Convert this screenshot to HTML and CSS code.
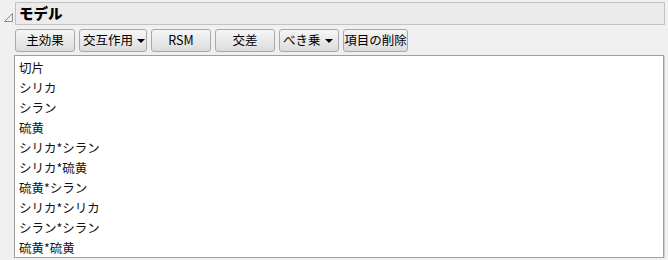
FILE: index.html
```html
<!DOCTYPE html>
<html lang="ja">
<head>
  <meta charset="UTF-8" />
  <title>モデル</title>
  <link rel="stylesheet" href="styles.css">
</head>
<body>
  <div class="panel">
    <div class="panel-head">
      <svg class="toggle" width="10" height="10" viewBox="0 0 10 10">
        <path d="M9.5 1.5 L9.5 9.5 L1.5 9.5 Z" fill="none" stroke="#8a8a8a" stroke-width="1"/>
      </svg>
      <div class="title">モデル</div>
    </div>
    <div class="body">
      <div class="toolbar">
        <button class="btn">主効果</button>
        <button class="btn menu">交互作用<span class="caret"></span></button>
        <button class="btn">RSM</button>
        <button class="btn">交差</button>
        <button class="btn menu short">べき乗<span class="caret"></span></button>
        <button class="btn tight">項目の削除</button>
      </div>
      <ul class="effects">
        <li>切片</li>
        <li>シリカ</li>
        <li>シラン</li>
        <li>硫黄</li>
        <li>シリカ*シラン</li>
        <li>シリカ*硫黄</li>
        <li>硫黄*シラン</li>
        <li>シリカ*シリカ</li>
        <li>シラン*シラン</li>
        <li>硫黄*硫黄</li>
      </ul>
    </div>
  </div>
</body>
</html>
```

FILE: styles.css
```css
:root {
  --bg: #f0f0f0;
  --head: #ebebeb;
  --line: #c2c2c2;
  --text: #000000;
}

body {
  margin: 0;
  background-color: var(--bg);
  font-family: "Noto Sans CJK JP", "Noto Sans", sans-serif;
  font-size: 12px;
  color: var(--text);
}

.panel {
  padding: 2px 3px 0 2px;
}

.panel-head {
  display: flex;
  align-items: center;
}

.toggle {
  margin: 7px 2px 0 1px;
  flex: none;
}

.title {
  flex: 1;
  height: 21px;
  line-height: 20px;
  background-color: var(--head);
  border: 1px solid var(--line);
  padding-left: 3px;
  font-weight: 900;
  font-size: 14.5px;
}

.body {
  margin-left: 12px;
}

.toolbar {
  display: flex;
  gap: 4px;
  padding: 4px 0 3px 1px;
}

.btn {
  flex: none;
  box-sizing: border-box;
  height: 23px;
  width: 60px;
  padding: 0;
  white-space: nowrap;
  font-family: inherit;
  font-size: 12.5px;
  color: var(--text);
  border: 1px solid #a9a9a9;
  border-radius: 3px;
  background: linear-gradient(#f6f6f6, #dcdcdc);
  display: flex;
  align-items: center;
  justify-content: center;
  line-height: 1;
}

.btn.menu {
  width: 68px;
  justify-content: flex-start;
  padding-left: 3px;
}

.btn.menu.short {
  width: 60px;
}

.btn.tight {
  width: 65px;
}

.caret {
  display: inline-block;
  margin-left: 4px;
  border-left: 4px solid transparent;
  border-right: 4px solid transparent;
  border-top: 4px solid #000;
}

.effects {
  list-style: none;
  margin: 0 1px 0 0;
  padding: 2px 0 0 4px;
  height: 199px;
  background-color: #ffffff;
  border: 1px solid #a0a0a0;
  box-shadow: 1px 1px 0 #d0d0d0;
}

.effects li {
  height: 20px;
  line-height: 20px;
  font-size: 12.5px;
  color: #111;
}
```
